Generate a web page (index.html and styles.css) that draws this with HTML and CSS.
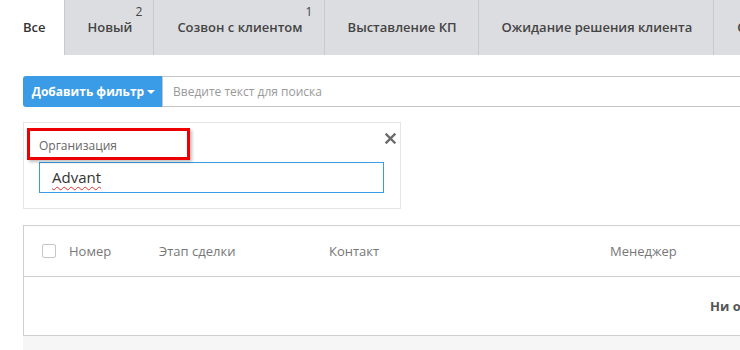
FILE: index.html
```html
<!DOCTYPE html>
<html>
<head>
    <meta charset="utf-8">
    <title>Сделки</title>
    <link rel="stylesheet" href="styles.css">
</head>
<body>
    <div class="tabs">
        <div class="tab active">Все</div>
        <div class="tab">Новый<sup>2</sup></div>
        <div class="tab">Созвон с клиентом<sup>1</sup></div>
        <div class="tab">Выставление КП</div>
        <div class="tab">Ожидание решения клиента</div>
        <div class="tab">Сделка заключена</div>
    </div>

    <div class="content">
        <div class="search">
            <button class="add-filter">Добавить фильтр <span class="caret"></span></button>
            <div class="search-input">Введите текст для поиска</div>
        </div>

        <div class="filter-box">
            <svg class="close" width="11" height="11" viewBox="0 0 11 11">
                <path d="M1.5 1.5 L9.5 9.5 M9.5 1.5 L1.5 9.5" stroke="#6b6b6b" stroke-width="2.4" stroke-linecap="square"/>
            </svg>
            <div class="filter-label">Организация</div>
            <div class="highlight"></div>
            <div class="filter-input"><span class="misspelled">Advant</span></div>
        </div>

        <div class="grid">
            <div class="grid-head">
                <span class="checkbox"></span>
                <span class="col col-num">Номер</span>
                <span class="col col-stage">Этап сделки</span>
                <span class="col col-contact">Контакт</span>
                <span class="col col-manager">Менеджер</span>
            </div>
            <div class="grid-empty">Ни одной записи не найдено</div>
        </div>
        <div class="grid-footer"></div>
    </div>
</body>
</html>
```

FILE: styles.css
```css
html, body {
    margin: 0;
    padding: 0;
    overflow: hidden;
}
body {
    font-family: "Open Sans", Arial, sans-serif;
    color: #333;
    background: #fff;
    width: 1200px;
}
.tabs {
    display: flex;
    height: 55px;
}
.tab {
    position: relative;
    padding: 0 21px 0 23px;
    line-height: 55px;
    font-size: 13px;
    font-weight: 600;
    color: #444;
    background: #dcdde0;
    border-left: 1px solid #c9cacd;
    white-space: nowrap;
}
.tab.active {
    background: #fff;
    border-left: none;
    padding: 0 18px 0 23px;
    color: #333;
}
.tab sup {
    position: absolute;
    top: -16px;
    font-size: 12px;
    font-weight: 400;
    margin-left: 3px;
}
.content {
    padding: 21px 0 0 23px;
}
.search {
    display: flex;
    height: 31px;
}
.add-filter {
    width: 139px;
    border: none;
    border-radius: 3px 0 0 3px;
    background: #3a9be6;
    color: #fff;
    font-family: "Open Sans", Arial, sans-serif;
    font-size: 12px;
    font-weight: 700;
    padding: 0 0 0 2px;
    cursor: pointer;
}
.caret {
    display: inline-block;
    width: 0;
    height: 0;
    border-left: 4px solid transparent;
    border-right: 4px solid transparent;
    border-top: 4px solid #fff;
    vertical-align: 2px;
}
.search-input {
    flex: 1;
    border: 1px solid #c4c4c4;
    padding-left: 10px;
    line-height: 29px;
    font-size: 12px;
    color: #999;
}
.filter-box {
    position: relative;
    height: 87px;
    margin-top: 15px;
    border: 1px solid #e6e6e6;
    box-sizing: border-box;
    width: 378px;
    padding: 9px 15px 0 15px;
}
.filter-label {
    font-size: 12px;
    color: #666;
    line-height: 28px;
    height: 30px;
}
.highlight {
    position: absolute;
    left: 3px;
    top: 5px;
    width: 157px;
    height: 26px;
    border: 3px solid #ee0000;
    box-shadow: 2px 2px 3px rgba(0, 0, 0, 0.25);
}
.close {
    position: absolute;
    right: 4px;
    top: 10px;
}
.filter-input {
    width: 345px;
    height: 31px;
    box-sizing: border-box;
    border: 1px solid #3a9be6;
    padding-left: 12px;
    line-height: 29px;
    font-size: 15px;
    color: #333;
}
.misspelled {
    text-decoration: underline wavy #e03030;
    text-decoration-thickness: 1px;
    text-underline-offset: 3px;
}
.grid {
    margin-top: 16px;
    border: 1px solid #cfcfcf;
    border-right: none;
}
.grid-head {
    display: flex;
    align-items: center;
    height: 50px;
    border-bottom: 1px solid #cfcfcf;
    font-size: 13px;
    color: #777;
}
.checkbox {
    width: 12px;
    height: 12px;
    border: 1px solid #c6c6c6;
    border-radius: 2px;
    margin-left: 18px;
}
.col-num {
    margin-left: 13px;
    width: 90px;
}
.col-stage {
    width: 170px;
}
.col-contact {
    width: 281px;
}
.grid-empty {
    height: 58px;
    line-height: 58px;
    padding-left: 686px;
    font-size: 13px;
    font-weight: 700;
    color: #555;
}
.grid-footer {
    height: 20px;
    background: #f6f6f6;
}
```
